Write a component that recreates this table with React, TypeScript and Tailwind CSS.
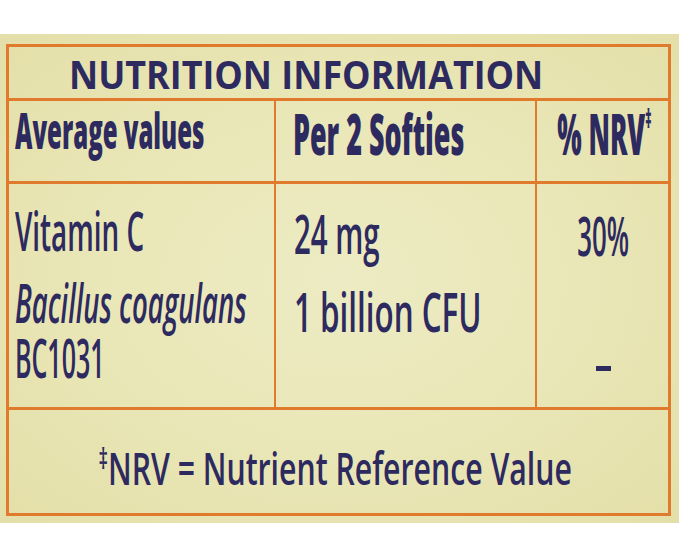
import React from "react";

const OR = "border-[#e07a2c]";

function T({
  s,
  className = "",
  children,
}: {
  s: string;
  className?: string;
  children: React.ReactNode;
}) {
  return (
    <span className={`inline-block whitespace-nowrap ${s} ${className}`}>{children}</span>
  );
}

export default function App() {
  return (
    <div className="w-[679px] h-[556px] bg-white pt-[34px] font-['Open_Sans',sans-serif] text-[#2d2a60] overflow-hidden">
      <div className="h-[489px] bg-[radial-gradient(ellipse_at_center,#edebc3_0%,#e9e6b6_55%,#e4dfa8_100%)] pt-[10px] pl-[6px]">
        <div className={`w-[665px] h-[472px] border-[3px] ${OR} flex flex-col`}>
          {/* Title */}
          <div className={`h-[54px] shrink-0 border-b-[3px] ${OR} pl-[60px] pt-[7px]`}>
            <T s="origin-left scale-x-[0.92]" className="text-[39px] leading-[40px] font-bold">
              NUTRITION INFORMATION
            </T>
          </div>

          {/* Column headings */}
          <div className={`h-[83px] shrink-0 grid grid-cols-[267px_261px_minmax(0,1fr)] border-b-[3px] ${OR}`}>
            <div className={`min-w-0 border-r-2 ${OR} pl-[6px] pt-[4px]`}>
              <T s="origin-left scale-x-[0.48]" className="text-[50px] leading-[50px] font-extrabold">
                Average values
              </T>
            </div>
            <div className={`min-w-0 border-r-2 ${OR} pl-[17px] pt-[4px]`}>
              <T s="origin-left scale-x-[0.48]" className="text-[56px] leading-[56px] font-extrabold">
                Per 2 Softies
              </T>
            </div>
            <div className="min-w-0 flex justify-center pt-[4px] pl-[4px]">
              <T s="origin-center scale-x-[0.46]" className="text-[56px] leading-[56px] font-extrabold">
                % NRV<span className="text-[26px] leading-[26px] align-top">‡</span>
              </T>
            </div>
          </div>

          {/* Values */}
          <div className={`h-[226px] shrink-0 grid grid-cols-[267px_261px_minmax(0,1fr)] border-b-[3px] ${OR}`}>
            <div className={`min-w-0 border-r-2 ${OR} pl-[6px] pt-[18px] flex flex-col items-start text-[55px] leading-[55px] font-semibold`}>
              <T s="origin-left scale-x-[0.506]">Vitamin C</T>
              <T s="origin-left scale-x-[0.5]" className="italic mt-[17px]">
                Bacillus coagulans
              </T>
              <T s="origin-left scale-x-[0.455]">BC1031</T>
            </div>
            <div className={`min-w-0 border-r-2 ${OR} pl-[18px] pt-[21px] flex flex-col items-start text-[55px] leading-[55px] font-semibold`}>
              <T s="origin-left scale-x-[0.535]">24 mg</T>
              <T s="origin-left scale-x-[0.57]" className="mt-[23px]">
                1 billion CFU
              </T>
            </div>
            <div className="min-w-0 pt-[23px] pl-[2px] flex flex-col items-center text-[55px] leading-[55px] font-semibold">
              <T s="origin-center scale-x-[0.47]">30%</T>
              <div className="mt-[104px] w-[15px] h-[5px] bg-[#2d2a60]" aria-label="–" />
            </div>
          </div>

          {/* Footnote */}
          <div className="flex-1 min-w-0 flex justify-center pt-[34px] pr-[7px]">
            <T s="origin-center scale-x-[0.657]" className="text-[46px] leading-[46px] font-semibold">
              <span className="text-[28px] leading-[28px] align-top">‡</span>NRV = Nutrient Reference Value
            </T>
          </div>
        </div>
      </div>
    </div>
  );
}
